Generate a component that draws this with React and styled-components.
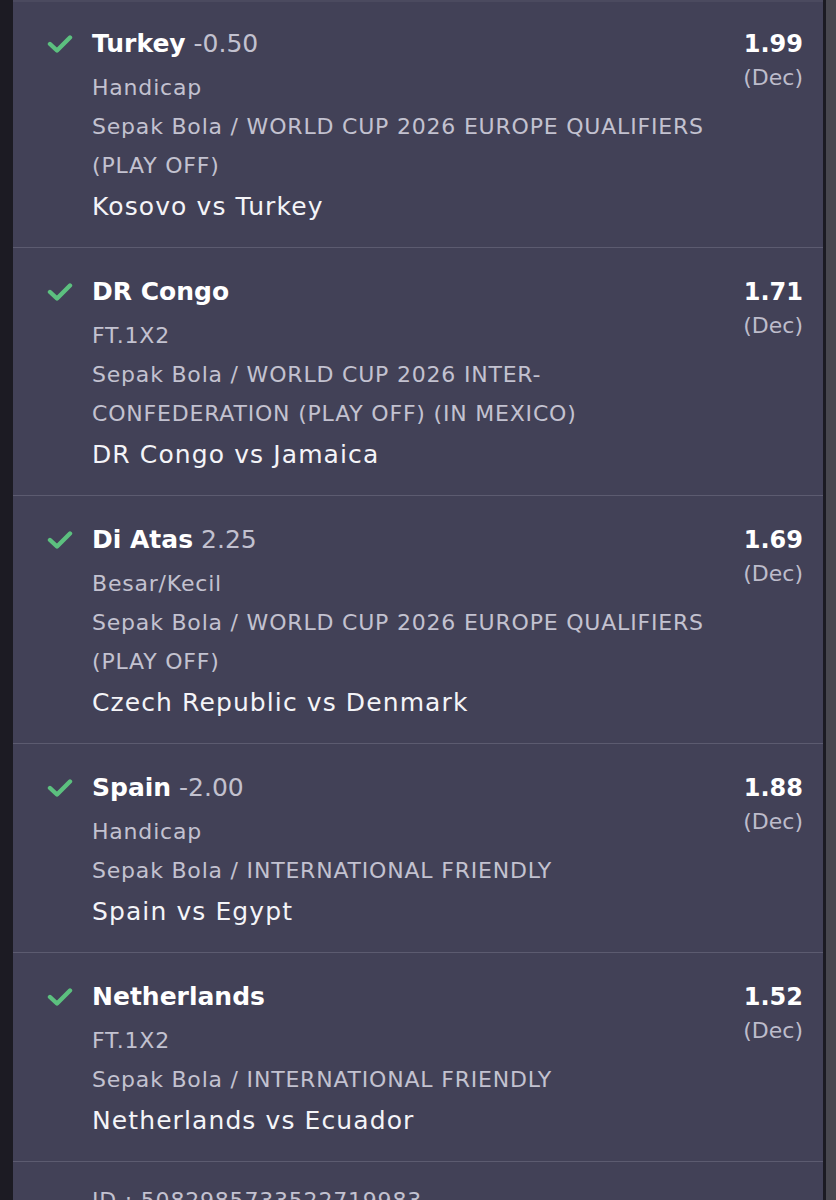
import React from 'react'
import styled, {createGlobalStyle} from 'styled-components';

const bets = [
    {pick: 'Turkey', line: '-0.50', market: 'Handicap', league: ['Sepak Bola / WORLD CUP 2026 EUROPE QUALIFIERS', '(PLAY OFF)'], match: 'Kosovo vs Turkey', odds: '1.99'},
    {pick: 'DR Congo', line: '', market: 'FT.1X2', league: ['Sepak Bola / WORLD CUP 2026 INTER-', 'CONFEDERATION (PLAY OFF) (IN MEXICO)'], match: 'DR Congo vs Jamaica', odds: '1.71'},
    {pick: 'Di Atas', line: '2.25', market: 'Besar/Kecil', league: ['Sepak Bola / WORLD CUP 2026 EUROPE QUALIFIERS', '(PLAY OFF)'], match: 'Czech Republic vs Denmark', odds: '1.69'},
    {pick: 'Spain', line: '-2.00', market: 'Handicap', league: ['Sepak Bola / INTERNATIONAL FRIENDLY'], match: 'Spain vs Egypt', odds: '1.88'},
    {pick: 'Netherlands', line: '', market: 'FT.1X2', league: ['Sepak Bola / INTERNATIONAL FRIENDLY'], match: 'Netherlands vs Ecuador', odds: '1.52'},
]

const Check = () => (
    <CheckIcon viewBox="0 0 26 20">
        <polyline points="3,10 10,16.5 23,3.5" fill="none" stroke="#5cc07f" strokeWidth="4.4"
                  strokeLinecap="round" strokeLinejoin="round"/>
    </CheckIcon>
)

const App = () => {
    return (
        <Page>
            <GlobalStyle/>
            <Panel>
                {bets.map((b, i) => (
                    <BetRow key={i}>
                        <Check/>
                        <Info>
                            <Title>{b.pick}{b.line && <Line> {b.line}</Line>}</Title>
                            <Sub first>{b.market}</Sub>
                            {b.league.map((l, j) => <Sub key={j}>{l}</Sub>)}
                            <Match>{b.match}</Match>
                        </Info>
                        <Odds>
                            <Price>{b.odds}</Price>
                            <Dec>(Dec)</Dec>
                        </Odds>
                    </BetRow>
                ))}
                <IdRow>ID : 5082985733522719983</IdRow>
            </Panel>
            <Rail/>
        </Page>
    );
}

export default App;

const GlobalStyle = createGlobalStyle`
  html, body {
    margin: 0;
    background: #1c1b23;
  }
  body {
    font-family: "DejaVu Sans", "Noto Sans", sans-serif;
  }
`

const Page = styled.div`
  display: flex;
  height: 1200px;
  overflow: hidden;
  background: #1c1b23;
  padding-left: 13px;
`

const Panel = styled.div`
  flex: 1;
  background: #424157;
  box-shadow: inset 0 2px 0 #4b4a5f;
`

const Rail = styled.div`
  width: 10px;
  margin-left: 3px;
  background: #48474f;
`

const BetRow = styled.div`
  display: flex;
  align-items: flex-start;
  padding: 27px 20px 20px 34px;
  border-bottom: 1px solid #5c5b70;
`

const CheckIcon = styled.svg`
  width: 26px;
  height: 20px;
  margin-top: 7px;
  margin-right: 19px;
  flex-shrink: 0;
`

const Info = styled.div`
  flex: 1;
  display: flex;
  flex-direction: column;
`

const Title = styled.div`
  font-size: 25px;
  line-height: 34px;
  font-weight: 700;
  color: #ffffff;
`

const Line = styled.span`
  font-weight: 400;
  color: #c2c1cf;
`

const Sub = styled.div`
  font-size: 22px;
  line-height: 39px;
  letter-spacing: 0.8px;
  color: #c3c2d0;
  margin-top: ${props => props.first ? '7px' : '0'};
`

const Match = styled.div`
  font-size: 25px;
  line-height: 40px;
  letter-spacing: 1.1px;
  margin-top: 2px;
  color: #f4f4f8;
`

const Odds = styled.div`
  display: flex;
  flex-direction: column;
  align-items: flex-end;
`

const Price = styled.div`
  font-size: 24px;
  line-height: 34px;
  font-weight: 700;
  color: #ffffff;
`

const Dec = styled.div`
  font-size: 22px;
  line-height: 34px;
  color: #bdbccb;
`

const IdRow = styled.div`
  padding: 22px 20px 0 79px;
  font-size: 22px;
  line-height: 34px;
  letter-spacing: 0.8px;
  color: #c3c2d0;
`
